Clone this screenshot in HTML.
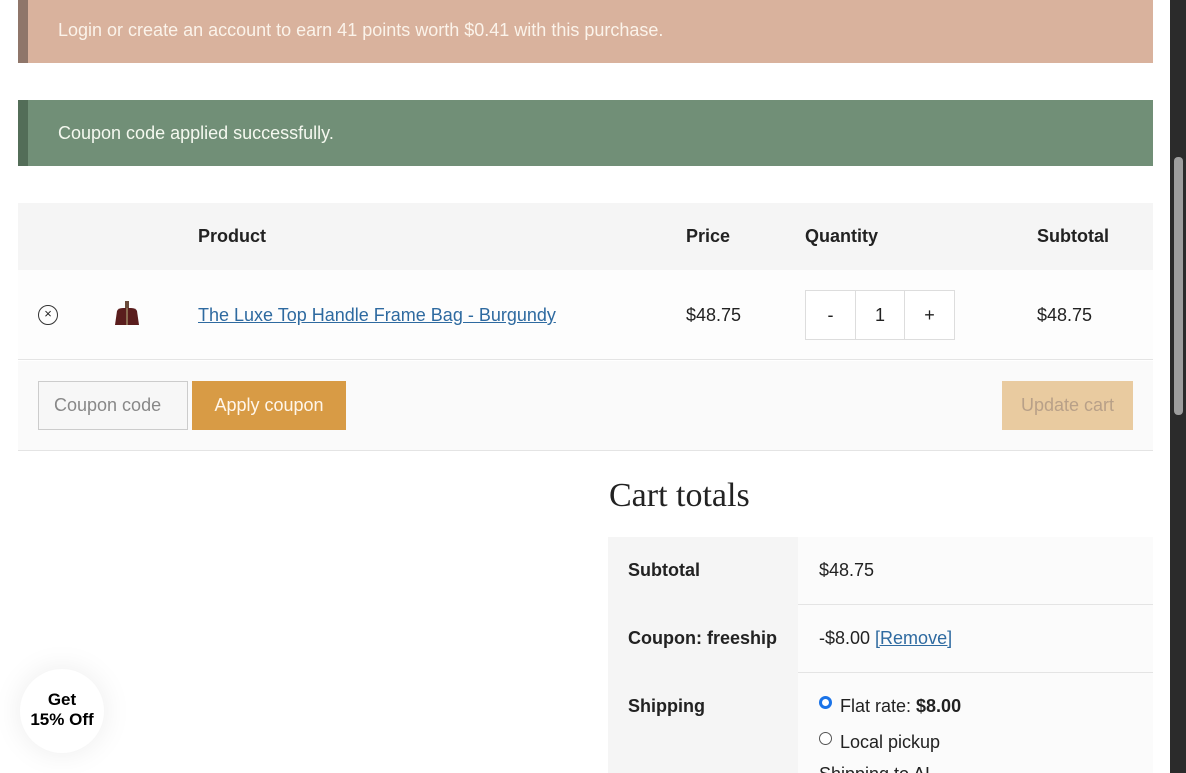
<!DOCTYPE html>
<html style="width:1186px;height:773px;overflow:hidden"><head><meta charset="utf-8"><style>
*{box-sizing:border-box;margin:0;padding:0}
body{width:1186px;height:773px;overflow:hidden;background:#fff;font-family:"Liberation Sans",sans-serif;color:#222;position:relative;font-size:18px}
.abs{position:absolute}
.note{position:absolute;left:18px;width:1135px;color:#fbf3ea;font-size:18px;padding-left:30px}
.t{position:absolute;white-space:nowrap}
b{font-weight:bold}
</style></head><body>
<div class="note" style="top:0;height:63px;background:#d9b29d;border-left:10px solid #8f766a;line-height:60px">Login or create an account to earn 41 points worth $0.41 with this purchase.</div>
<div class="note" style="top:100px;height:66px;background:#718f77;border-left:10px solid #536d58;line-height:66px;color:#f4f8ef">Coupon code applied successfully.</div>

<div class="abs" style="left:18px;top:203px;width:1135px;height:67px;background:#f5f5f5"></div>
<div class="abs" style="left:18px;top:270px;width:1135px;height:90px;background:#fdfdfd;border-bottom:1px solid #e4e4e4"></div>
<div class="abs" style="left:18px;top:361px;width:1135px;height:90px;background:#fafafa;border-bottom:1px solid #e4e4e4"></div>
<div class="t" style="left:198px;top:226px;font-weight:bold">Product</div>
<div class="t" style="left:686px;top:226px;font-weight:bold">Price</div>
<div class="t" style="left:805px;top:226px;font-weight:bold">Quantity</div>
<div class="t" style="left:1037px;top:226px;font-weight:bold">Subtotal</div>

<div class="abs" style="left:38px;top:305px;width:20px;height:20px;border:1.3px solid #333;border-radius:50%;font-size:13px;line-height:16px;text-align:center">×</div>
<svg class="abs" style="left:113px;top:301px" width="28" height="26" viewBox="0 0 28 26"><rect x="12" y="0" width="4" height="8" fill="#6a4a3a"/><path d="M4 10 Q5 7 10 7 L18 7 Q23 7 24 10 L26 24 L2 24 Z" fill="#5a1d1d"/><rect x="13" y="7" width="2" height="17" fill="#8a6a50"/></svg>
<div class="t" style="left:198px;top:305px;color:#2e6aa0;text-decoration:underline">The Luxe Top Handle Frame Bag - Burgundy</div>
<div class="t" style="left:686px;top:305px">$48.75</div>
<div class="abs" style="left:805px;top:290px;width:150px;height:50px;border:1px solid #ddd;display:flex;background:#fff">
<div style="width:50px;border-right:1px solid #ddd;text-align:center;line-height:48px">-</div>
<div style="width:49px;border-right:1px solid #ddd;text-align:center;line-height:48px">1</div>
<div style="width:49px;text-align:center;line-height:48px">+</div></div>
<div class="t" style="left:1037px;top:305px">$48.75</div>

<div class="abs" style="left:38px;top:381px;width:150px;height:49px;border:1px solid #ccc;background:#f7f7f7;color:#888;padding-left:15px;line-height:47px">Coupon code</div>
<div class="abs" style="left:192px;top:381px;width:154px;height:49px;background:#d89b45;color:#fff6ea;text-align:center;line-height:49px">Apply coupon</div>
<div class="abs" style="left:1002px;top:381px;width:131px;height:49px;background:#e9cba0;color:#b8a088;text-align:center;line-height:49px">Update cart</div>

<div class="t" style="left:609px;top:477px;font-family:'Liberation Serif',serif;font-size:34px;color:#222">Cart totals</div>
<div class="abs" style="left:608px;top:537px;width:190px;height:236px;background:#f5f5f5"></div>
<div class="abs" style="left:798px;top:537px;width:355px;height:236px;background:#fbfbfb"></div>
<div class="abs" style="left:798px;top:604px;width:355px;height:1px;background:#e4e4e4"></div>
<div class="abs" style="left:798px;top:672px;width:355px;height:1px;background:#e4e4e4"></div>
<div class="t" style="left:628px;top:560px;font-weight:bold">Subtotal</div>
<div class="t" style="left:819px;top:560px">$48.75</div>
<div class="t" style="left:628px;top:628px;font-weight:bold">Coupon: freeship</div>
<div class="t" style="left:819px;top:628px">-$8.00 <span style="color:#2e6aa0;text-decoration:underline">[Remove]</span></div>
<div class="t" style="left:628px;top:696px;font-weight:bold">Shipping</div>
<div class="abs" style="left:819px;top:696px;width:13px;height:13px;border-radius:50%;border:3.5px solid #1a73e8;background:#fff"></div>
<div class="t" style="left:840px;top:696px">Flat rate: <b>$8.00</b></div>
<div class="abs" style="left:819px;top:732px;width:13px;height:13px;border-radius:50%;border:1px solid #555;background:#fff"></div>
<div class="t" style="left:840px;top:732px">Local pickup</div>
<div class="t" style="left:819px;top:764px;height:9px;overflow:hidden">Shipping to AL</div>

<div class="abs" style="left:20px;top:669px;width:84px;height:84px;border-radius:50%;background:#fff;box-shadow:0 0 30px rgba(0,0,0,0.08);text-align:center;font-weight:bold;font-size:17px;line-height:20px;padding-top:21px;color:#000">Get<br>15% Off</div>

<div class="abs" style="left:1170px;top:0;width:16px;height:773px;background:#2b2b2b"></div>
<div class="abs" style="left:1174px;top:157px;width:9px;height:258px;background:#9e9e9e;border-radius:4px"></div>
</body></html>
